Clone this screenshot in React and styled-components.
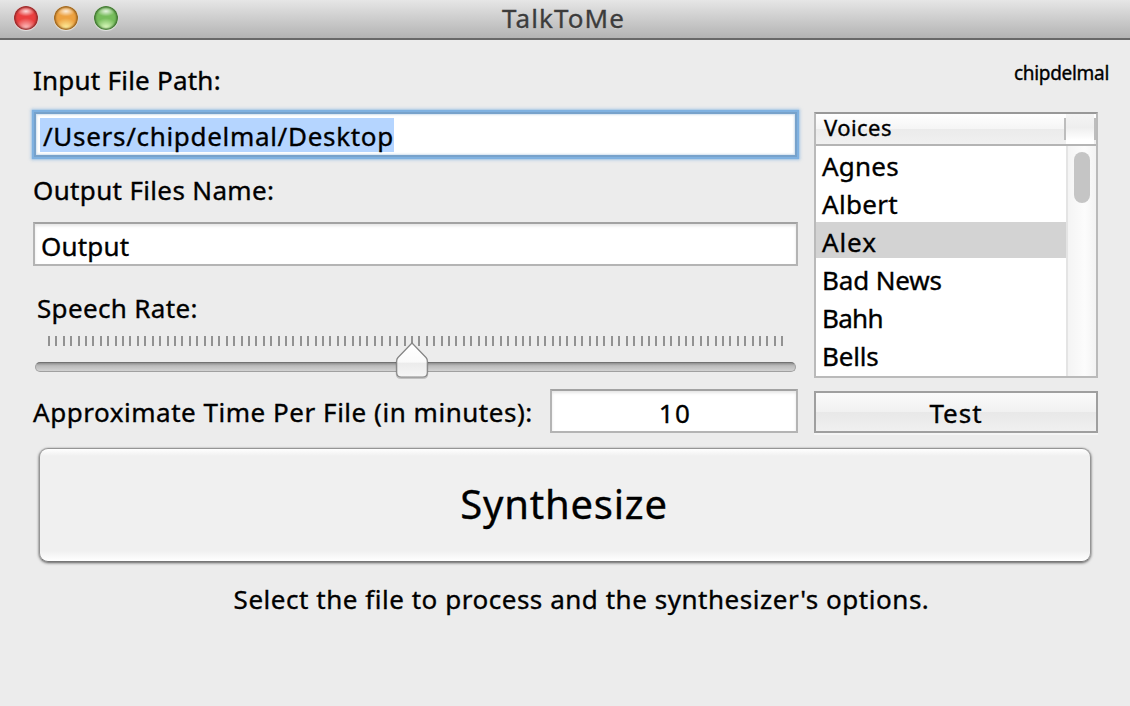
import React from "react";
import styled, { createGlobalStyle } from "styled-components";

const GlobalStyle = createGlobalStyle`
  * { box-sizing: border-box; }
  body { margin: 0; background: #ececec; }
  button, input { font: inherit; color: inherit; }
`;

const Window = styled.div`
  width: 1130px;
  height: 706px;
  overflow: hidden;
  background: #ececec;
  color: #000;
  font-family: "Noto Sans", "Lucida Grande", sans-serif;
  font-size: 26px;
  line-height: 30px;
  white-space: nowrap;
  -webkit-text-stroke: 0.35px currentColor;
`;

const Text = styled.span`
  letter-spacing: ${(p) => p.$track || 0}px;
`;

const TitleBar = styled.header`
  display: grid;
  grid-template-columns: 118px 1fr 118px;
  height: 40px;
  border-bottom: 2px solid #686868;
  background: linear-gradient(#e6e6e6, #b3b3b3);
`;

const Lights = styled.div`
  display: flex;
  gap: 16px;
  padding: 6px 0 0 14px;
`;

const Light = styled.span`
  width: 24px;
  height: 24px;
  border-radius: 50%;
  background:
    radial-gradient(ellipse 9px 5px at 50% 22%, rgba(255, 255, 255, 0.8), rgba(255, 255, 255, 0) 100%),
    radial-gradient(ellipse 11px 10px at 50% 92%, ${(p) => p.$glow}, transparent 100%),
    ${(p) => p.$color};
  box-shadow:
    inset 0 0 2px 1.5px ${(p) => p.$edge},
    0 1px 1px rgba(255, 255, 255, 0.6);
`;

const Title = styled.h1`
  margin: 0;
  padding-right: 3px;
  font-size: 26px;
  font-weight: 400;
  line-height: 37px;
  text-align: center;
  color: #3c3c3c;
  text-shadow: 0 1px 0 rgba(255, 255, 255, 0.4);
`;

const Content = styled.main`
  display: grid;
  grid-template-columns: 765px 284px;
  column-gap: 16px;
  padding: 0 0 0 33px;
`;

const Form = styled.section`
  display: flex;
  flex-direction: column;
  padding-top: 25px;
`;

const Label = styled.label`
  height: 30px;
  margin-top: ${(p) => p.$gap || 0}px;
  padding-left: ${(p) => p.$indent || 0}px;
`;

const Field = styled.div`
  height: 44px;
  margin-top: 17px;
  padding: 7px 6px 0;
  border: 2px solid #b4b4b4;
  border-top-color: #a2a2a2;
  background: #fff;
  box-shadow: inset 0 2px 3px rgba(0, 0, 0, 0.1);
`;

const FocusedField = styled(Field)`
  height: 45px;
  margin-left: 1px;
  margin-right: 1px;
  padding: 4px 4px 0;
  border-color: #77a2cb;
  box-shadow:
    0 0 1px 2px #7fb1e0,
    0 0 3px 3px rgba(127, 177, 224, 0.6),
    inset 0 0 2px 1px rgba(119, 162, 203, 0.35);
`;

const Selection = styled.span`
  display: inline-block;
  height: 34px;
  padding: 3px 0 0 3px;
  background: #b5d5ff;
  letter-spacing: 0.69px;
`;

const Slider = styled.div`
  position: relative;
  height: 36px;
  margin-top: 13px;
`;

const Ticks = styled.div`
  display: flex;
  justify-content: space-between;
  height: 10px;
  margin: 0 14px 0 15px;
`;

const Tick = styled.i`
  width: 2px;
  background: #929292;
`;

const Track = styled.div`
  height: 10px;
  margin: 16px 2px 0;
  border: 1px solid #a0a0a0;
  border-top: 1px solid #727272;
  border-radius: 5px;
  background: linear-gradient(#8f8f8f, #bcbcbc 35%, #d2d2d2);
`;

const Thumb = styled.svg`
  position: absolute;
  left: 361px;
  top: 4px;
`;

const TimeRow = styled.div`
  display: flex;
  justify-content: space-between;
  margin-top: 17px;
`;

const TimeLabel = styled.label`
  padding-top: 8px;
`;

const TimeField = styled(Field)`
  width: 248px;
  margin-top: 0;
  padding-left: 8px;
  text-align: center;
`;

const Side = styled.aside`
  display: flex;
  flex-direction: column;
  padding-top: 17px;
`;

const UserName = styled.div`
  height: 55px;
  margin-right: -11px;
  font-size: 19px;
  line-height: 32px;
  text-align: right;
`;

const VoiceList = styled.div`
  height: 266px;
  border: 2px solid #bababa;
  border-top-color: #989898;
  background: #fff;
`;

const ListHeader = styled.div`
  display: flex;
  height: 32px;
  border-bottom: 2px solid #b4b4b4;
  background: linear-gradient(#fff, #f5f5f5 50%, #ebebeb 50%, #f0f0f0);
  font-size: 22px;
  line-height: 26px;
`;

const HeaderCell = styled.div`
  flex: 1;
  padding-left: 8px;
`;

const Divider = styled.i`
  width: 2px;
  height: 22px;
  margin-top: 4px;
  background: #bdbdbd;
`;

const Corner = styled.div`
  width: 28px;
  height: 30px;
  background: linear-gradient(#f4f4f4, #eeeeee 45%, #fff 85%);
`;

const ListBody = styled.div`
  display: flex;
  height: 230px;
`;

const Rows = styled.ul`
  flex: 1;
  margin: 0;
  padding: 0;
  list-style: none;
`;

const Row = styled.li`
  height: 36px;
  margin-bottom: 2px;
  padding-left: 6px;
  line-height: 40px;
  background: ${(p) => (p.$selected ? "#d3d3d3" : "transparent")};
`;

const ScrollBar = styled.div`
  width: 30px;
  padding: 6px 0 0 6px;
  border-left: 2px solid #e4e4e4;
  background: linear-gradient(90deg, #f4f4f4, #fcfcfc 60%, #f3f3f3);
`;

const ScrollThumb = styled.div`
  width: 16px;
  height: 51px;
  border-radius: 8px;
  background: #c5c5c5;
`;

const TestButton = styled.button`
  height: 42px;
  margin-top: 13px;
  padding: 2px 0 0;
  border: 2px solid #9f9f9f;
  background: linear-gradient(#fafafa, #f1f1f1 50%, #e8e8e8 50%, #f0f0f0);
  box-shadow: 0 2px 0 #f5f5f5;
  line-height: 30px;
  -webkit-text-stroke: inherit;
`;

const SynthesizeButton = styled.button`
  display: block;
  width: 1052px;
  height: 114px;
  margin: 15px 0 0 39px;
  padding: 0 2px 2px 0;
  border: 1px solid #959595;
  border-bottom-color: #777;
  border-radius: 9px;
  background: linear-gradient(#fff, #f0f0f0 7px, #f0f0f0 calc(100% - 10px), #fff);
  box-shadow:
    0 0 1px rgba(0, 0, 0, 0.3),
    0 1px 3px rgba(0, 0, 0, 0.6);
  font-size: 40px;
  -webkit-text-stroke: 0.35px currentColor;
`;

const Status = styled.p`
  margin: 22px 0 0 33px;
  text-align: center;
`;

const VOICES = [
  { name: "Agnes", track: 0.2 },
  { name: "Albert", track: 0.3 },
  { name: "Alex", track: 0.9, selected: true },
  { name: "Bad News", track: -0.15 },
  { name: "Bahh", track: -0.7 },
  { name: "Bells", track: -0.2 },
];

const THUMB_SHAPE =
  "M18 3 L32 17.5 Q33.3 19 33.3 21 V32.5 Q33.3 37 28.8 37 H7.2 Q2.7 37 2.7 32.5 V21 Q2.7 19 4 17.5 Z";

export default function App() {
  return (
    <Window>
      <GlobalStyle />
      <TitleBar>
        <Lights>
          <Light $color="#ea4040" $edge="#8f2a2a" $glow="#ffc6c6" />
          <Light $color="#eda241" $edge="#95601d" $glow="#fff3a0" />
          <Light $color="#77bd5c" $edge="#3d7030" $glow="#e3ffc6" />
        </Lights>
        <Title><Text $track={1.1}>TalkToMe</Text></Title>
      </TitleBar>
      <Content>
        <Form>
          <Label><Text $track={0.23}>Input File Path:</Text></Label>
          <FocusedField><Selection>/Users/chipdelmal/Desktop</Selection></FocusedField>
          <Label $gap={18}><Text $track={0.35}>Output Files Name:</Text></Label>
          <Field><Text $track={0.2}>Output</Text></Field>
          <Label $gap={27} $indent={4}><Text $track={0.35}>Speech Rate:</Text></Label>
          <Slider>
            <Ticks>
              {Array.from({ length: 100 }, (_, i) => <Tick key={i} />)}
            </Ticks>
            <Track />
            <Thumb width="36" height="40" viewBox="0 0 36 40">
              <defs>
                <linearGradient id="thumb" x1="0" y1="0" x2="0" y2="1">
                  <stop offset="0" stopColor="#fff" />
                  <stop offset="0.57" stopColor="#fafafa" />
                  <stop offset="0.58" stopColor="#ebebeb" />
                  <stop offset="1" stopColor="#f6f6f6" />
                </linearGradient>
              </defs>
              <path
                d={THUMB_SHAPE} transform="translate(0 1)"
                fill="none" stroke="#000" strokeOpacity="0.18" strokeWidth="2"
              />
              <path
                d={THUMB_SHAPE}
                fill="url(#thumb)" stroke="#858585" strokeWidth="1.2" strokeLinejoin="round"
              />
            </Thumb>
          </Slider>
          <TimeRow>
            <TimeLabel><Text $track={0.53}>Approximate Time Per File (in minutes):</Text></TimeLabel>
            <TimeField><Text $track={1.5}>10</Text></TimeField>
          </TimeRow>
        </Form>
        <Side>
          <UserName><Text $track={-0.3}>chipdelmal</Text></UserName>
          <VoiceList>
            <ListHeader>
              <HeaderCell><Text $track={0.45}>Voices</Text></HeaderCell>
              <Divider />
              <Corner />
              <Divider />
            </ListHeader>
            <ListBody>
              <Rows>
                {VOICES.map((v) => (
                  <Row key={v.name} $selected={v.selected}><Text $track={v.track}>{v.name}</Text></Row>
                ))}
              </Rows>
              <ScrollBar><ScrollThumb /></ScrollBar>
            </ListBody>
          </VoiceList>
          <TestButton><Text $track={1}>Test</Text></TestButton>
        </Side>
      </Content>
      <SynthesizeButton><Text $track={0.8}>Synthesize</Text></SynthesizeButton>
      <Status><Text $track={0.53}>Select the file to process and the synthesizer's options.</Text></Status>
    </Window>
  );
}
